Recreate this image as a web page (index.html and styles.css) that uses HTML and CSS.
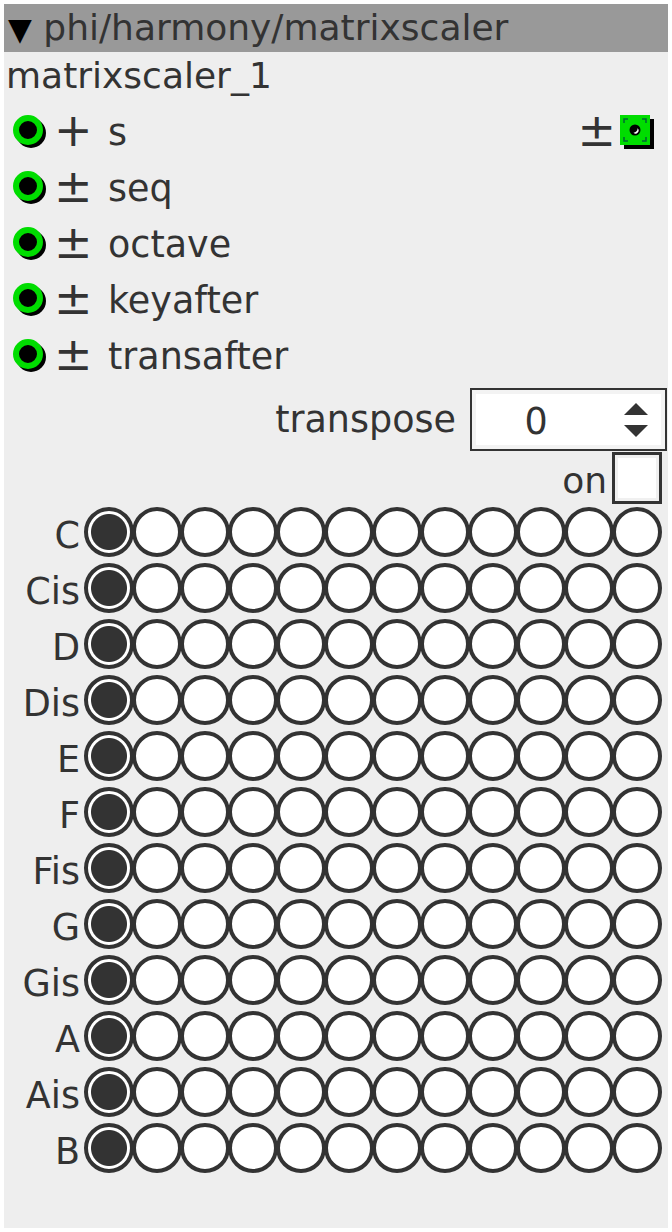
FILE: index.html
```html
<!DOCTYPE html>
<html>
<head>
<meta charset="utf-8">
<link rel="stylesheet" href="styles.css">
</head>
<body>
<div class="panel">
  <div class="header"><span class="tri">▼</span> phi/harmony/matrixscaler</div>
  <div class="title">matrixscaler_1</div>
  <div class="ports">
    <div class="port">
      <svg class="jack" viewBox="0 0 36 36" width="36" height="36"><circle cx="18" cy="18" r="15" fill="#000"/><circle cx="15" cy="15" r="12" fill="#000" stroke="#0d0" stroke-width="6"/></svg>
      <span class="sign">+</span><span class="pname">s</span>
      <span class="right"><span class="sign">±</span>
        <svg class="outjack" viewBox="0 0 36 36" width="36" height="36"><rect x="4" y="4" width="30" height="30" fill="#000"/><rect x="0" y="0" width="30" height="30" fill="#0d0"/><path d="M4 8V4h4M22 4h4v4M26 22v4h-4M8 26H4v-4" fill="none" stroke="#063" stroke-width="1.5"/><circle cx="15" cy="15" r="5.5" fill="#000"/><path d="M17.5 13.2a3 3 0 0 1-4 4.5a4 4 0 0 0 4-4.5z" fill="#fff"/></svg>
      </span>
    </div>
    <div class="port">
      <svg class="jack" viewBox="0 0 36 36" width="36" height="36"><circle cx="18" cy="18" r="15" fill="#000"/><circle cx="15" cy="15" r="12" fill="#000" stroke="#0d0" stroke-width="6"/></svg>
      <span class="sign">±</span><span class="pname">seq</span>
    </div>
    <div class="port">
      <svg class="jack" viewBox="0 0 36 36" width="36" height="36"><circle cx="18" cy="18" r="15" fill="#000"/><circle cx="15" cy="15" r="12" fill="#000" stroke="#0d0" stroke-width="6"/></svg>
      <span class="sign">±</span><span class="pname">octave</span>
    </div>
    <div class="port">
      <svg class="jack" viewBox="0 0 36 36" width="36" height="36"><circle cx="18" cy="18" r="15" fill="#000"/><circle cx="15" cy="15" r="12" fill="#000" stroke="#0d0" stroke-width="6"/></svg>
      <span class="sign">±</span><span class="pname">keyafter</span>
    </div>
    <div class="port">
      <svg class="jack" viewBox="0 0 36 36" width="36" height="36"><circle cx="18" cy="18" r="15" fill="#000"/><circle cx="15" cy="15" r="12" fill="#000" stroke="#0d0" stroke-width="6"/></svg>
      <span class="sign">±</span><span class="pname">transafter</span>
    </div>
  </div>
  <div class="transpose">
    <span class="tlabel">transpose</span>
    <div class="spin">
      <span class="spinval">0</span>
      <span class="arrows"><span class="up"></span><span class="down"></span></span>
    </div>
  </div>
  <div class="onrow">
    <span class="onlabel">on</span>
    <span class="check"></span>
  </div>
  <div class="grid" id="grid"></div>
</div>
<script src="app.js"></script>
</body>
</html>
```

FILE: app.js
```js
var notes = ["C","Cis","D","Dis","E","F","Fis","G","Gis","A","Ais","B"];
var grid = document.getElementById("grid");
notes.forEach(function (n) {
  var row = document.createElement("div");
  row.className = "row";
  var l = document.createElement("span");
  l.className = "note";
  l.textContent = n;
  row.appendChild(l);
  for (var i = 0; i < 12; i++) {
    var c = document.createElement("span");
    c.className = i === 0 ? "cell on" : "cell";
    row.appendChild(c);
  }
  grid.appendChild(row);
});
```

FILE: styles.css
```css
html, body { margin: 0; padding: 0; background: #fff; }
body { padding: 4px; font-family: "DejaVu Sans", sans-serif; color: #333; }
.panel { background: #eeeeee; height: 1224px; overflow: hidden; }
.header { height: 48px; line-height: 48px; background: #999999; font-size: 36px; padding-left: 4px; white-space: nowrap; }
.tri { font-size: 31px; color: #000; display: inline-block; margin-left: 0; }
.title { height: 52px; line-height: 48px; font-size: 36px; padding-left: 2px; }
.ports { display: flex; flex-direction: column; }
.port { height: 56px; display: flex; align-items: center; font-size: 36.5px; position: relative; }
.jack { margin-left: 9px; margin-top: 2px; flex: none; }
.sign { width: 38px; margin-left: 5px; text-align: center; font-size: 46px; line-height: 56px; margin-top: -4px; }
.pname { margin-left: 16px; }
.right { margin-left: auto; display: flex; align-items: center; margin-right: 12px; }
.right .sign { width: auto; margin-left: 0; margin-right: 4px; }
.outjack { margin-top: 2px; }
.transpose { display: flex; justify-content: flex-end; align-items: center; margin-top: 4px; height: 63px; font-size: 36.5px; }
.tlabel { margin-right: 14px; margin-bottom: 0; }
.spin { width: 193px; height: 59px; border: 2px solid #333; background: #fff; box-shadow: inset 0 0 0 4px #f3f3f3; display: flex; align-items: center; margin-right: 1px; }
.spinval { width: 128px; text-align: center; margin-top: 4px; }
.arrows { display: flex; flex-direction: column; align-items: center; margin-left: 24px; gap: 10px; }
.up { width: 0; height: 0; border-left: 12px solid transparent; border-right: 12px solid transparent; border-bottom: 12px solid #333; }
.down { width: 0; height: 0; border-left: 12px solid transparent; border-right: 12px solid transparent; border-top: 12px solid #333; }
.onrow { display: flex; justify-content: flex-end; align-items: center; margin-top: 1px; height: 52px; font-size: 36px; }
.onlabel { margin-right: 5px; margin-top: 4px; }
.check { width: 44px; height: 46px; border: 3px solid #333; background: #fff; box-shadow: inset 0 0 0 3px #f0f0f0; margin-right: 6px; }
.grid { margin-top: 3px; display: flex; flex-direction: column; gap: 6px; }
.row { display: flex; align-items: center; height: 50px; }
.note { width: 76px; text-align: right; font-size: 36.5px; padding-right: 4px; padding-top: 6px; }
.cell { width: 42px; height: 42px; border: 4px solid #333; border-radius: 50%; background: #fff; margin-left: -2px; flex: none; }
.cell.on { margin-left: 0; background: radial-gradient(circle, #333 0 17.5px, #fff 18.5px); }
```
